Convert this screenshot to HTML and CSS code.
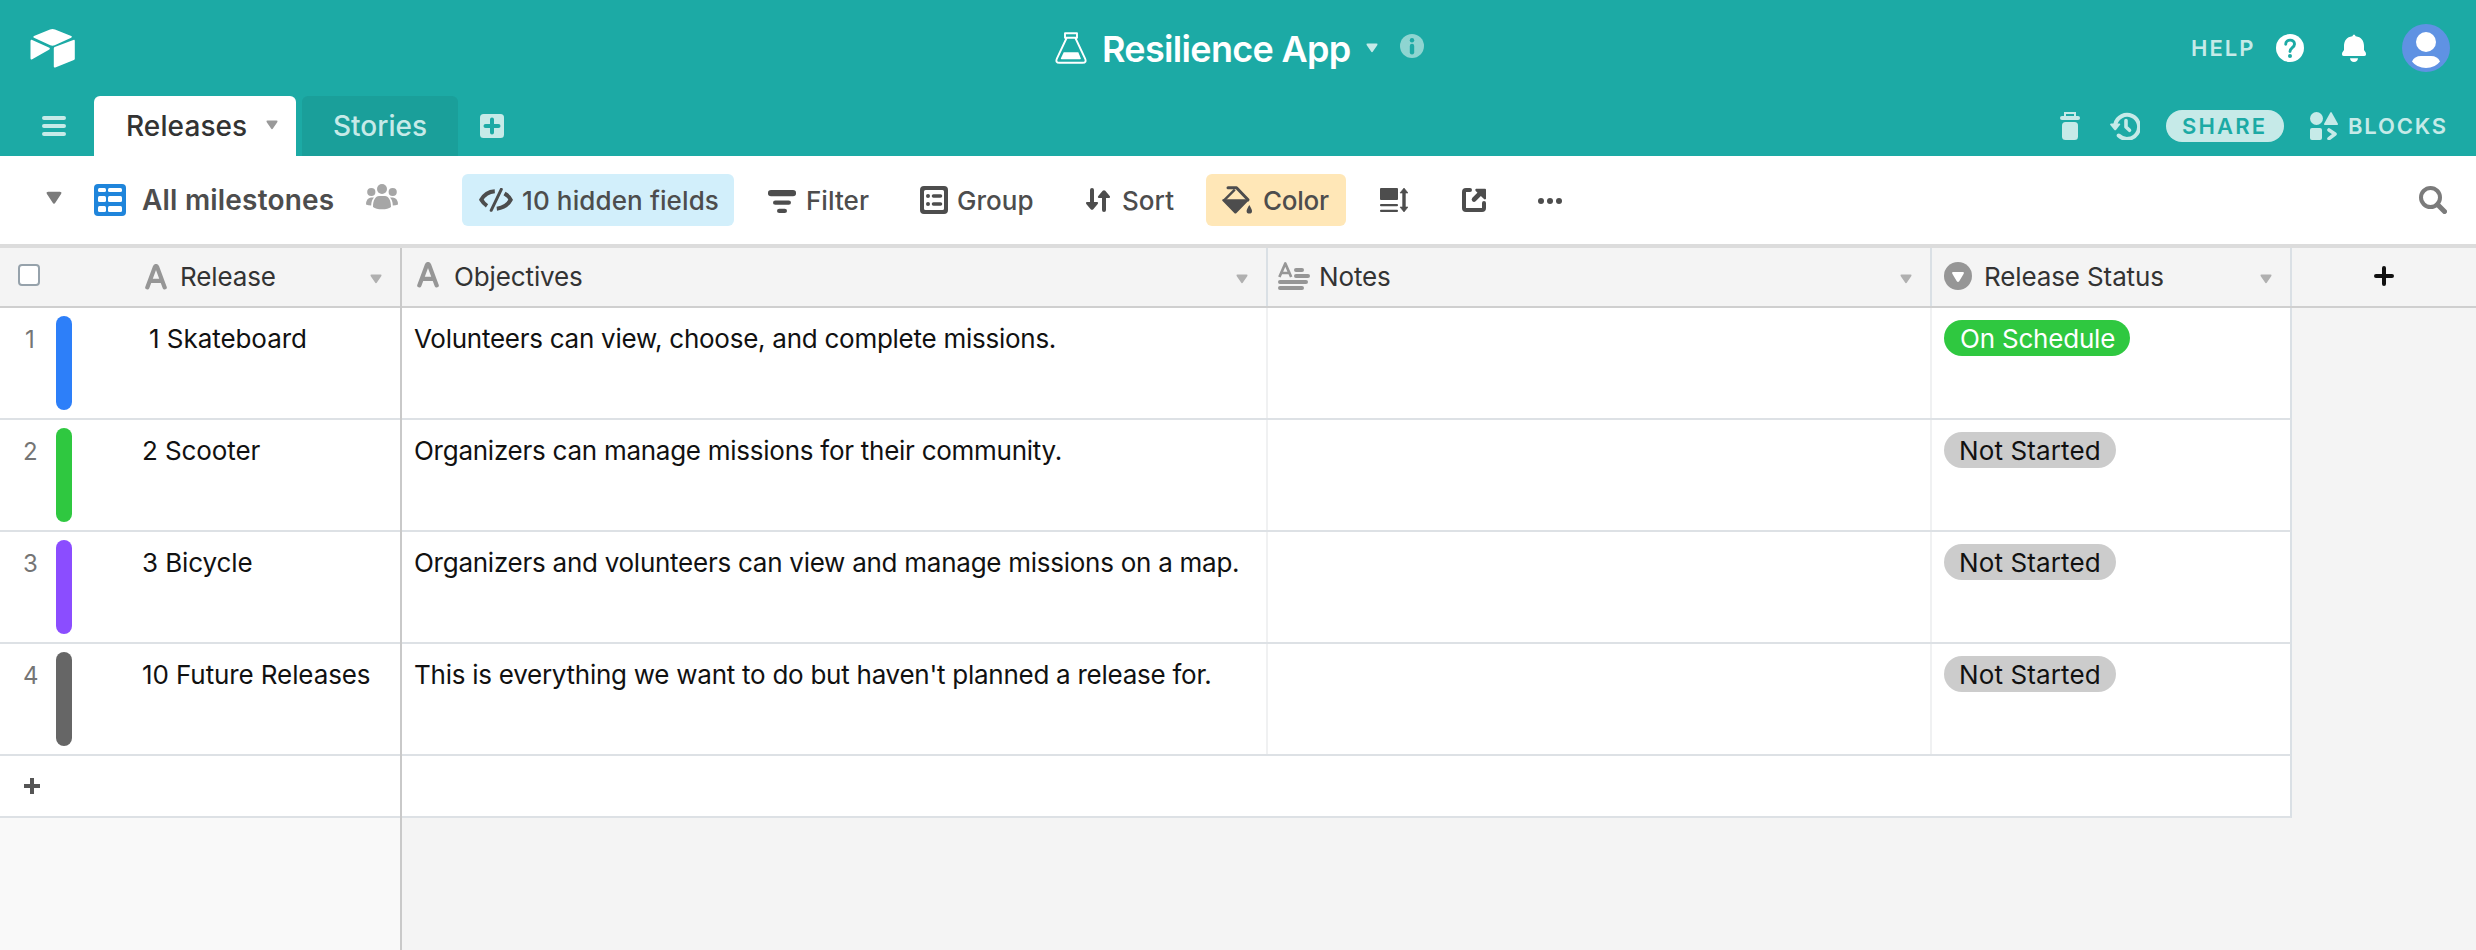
FILE: index.html
```html
<!DOCTYPE html>
<html lang="en">
<head>
<meta charset="utf-8">
<title>Resilience App</title>
<link rel="stylesheet" href="styles.css">
</head>
<body>
<svg class="defs" width="0" height="0">
  <symbol id="caret" viewBox="0 0 12 10"><path d="M1.600.5h8.800q1.600 0 1 1.400L7.100 8.300Q6 10 4.900 8.300L.6 1.900Q0 .5 1.600.5z"/></symbol>
  <symbol id="text-a" viewBox="0 0 22 26"><path d="M2.300 23.400 9.700 3.400q1.300-2.800 2.600 0l7.400 20M5.500 16.800h11" fill="none" stroke="currentColor" stroke-width="4.200" stroke-linecap="round" stroke-linejoin="round"/></symbol>
</svg>
<div class="app">
  <header class="header">
    <div class="topbar">
      <svg class="logo" viewBox="0 0 46 40"><path d="M20 1.400 4 7.900q-1.700.9 0 1.800l16.300 7.500q2.200.9 4.400 0L41.200 9.700q1.600-.9 0-1.700L25 1.400q-2.500-.9-5 0zM.5 13.200v17q0 1.700 1.700 1L19.400 21.400q1-.9 0-1.600L2.200 11.900Q.5 11.500.500 13.200zM23.800 20.300v18.200q0 1.500 1.500.9l18.600-7.300q.9-.4.9-1.400V12.900q0-1.600-1.500-1l-18.600 7q-.9.4-.9 1.400z"/></svg>
      <div class="title">
        <svg class="flask" viewBox="0 0 32 32"><path d="M10 1.200h12v4.600H10zM11.600 6 2 26.300Q0 30.800 4.500 30.800h23q4.500 0 2.500-4.500L20.400 6" fill="none" stroke="#fff" stroke-width="1.900" stroke-linejoin="round"/><path d="M8.700 20.200h14.600l2.500 6q.3 1-.8 1H6.600q-1 0-.7-1z" fill="#fff"/></svg>
        <h1>Resilience App</h1>
        <svg class="title-caret" viewBox="0 0 12 10"><use href="#caret"/></svg>
        <svg class="info" viewBox="0 0 24 24"><circle cx="12" cy="12" r="12" fill="#8ed5d1"/><circle cx="12" cy="6.200" r="2.200"/><path d="M12 12v6.200" stroke="#1caaa5" stroke-width="4.400" stroke-linecap="round"/></svg>
      </div>
      <div class="account">
        <span class="caps">HELP</span>
        <svg class="help-icon" viewBox="0 0 28 28"><circle cx="14" cy="14" r="14" fill="#fff"/><path d="M9.700 10.300c0-5.600 9-5.400 8.800-.2-.1 3.600-4.500 3.600-4.500 7.500" fill="none" stroke="#1caaa5" stroke-width="2.900" stroke-linecap="round"/><circle cx="14" cy="22" r="2" fill="#1caaa5"/></svg>
        <svg class="bell" viewBox="0 0 24 28"><path d="M10.300 2.300Q12-1.500 13.700 2.300C19.300 3 22 7 22 12v4l1.700 2.600Q24.800 22 22 22H2q-2.800 0-1.700-3.400L2 16v-4C2 7 4.700 3 10.300 2.300zM8 24.200h8q-.5 3.800-4 3.800t-4-3.800z"/></svg>
        <svg class="avatar" viewBox="0 0 48 48"><circle cx="24" cy="24" r="24" fill="#5f92e3"/><circle cx="24" cy="18" r="10" fill="#fff"/><path d="M10 37.500Q12.500 32 19 32h10q6.500 0 9 5.500-5 6.500-14 6.500t-14-6.500z" fill="#fff"/></svg>
      </div>
    </div>
    <div class="tabbar">
      <svg class="menu" viewBox="0 0 24 20"><path d="M2 2h20M2 10h20M2 18h20" stroke="#c6eae8" stroke-width="4" stroke-linecap="round"/></svg>
      <div class="tab active"><span>Releases</span><svg class="caret" viewBox="0 0 12 10"><use href="#caret"/></svg></div>
      <div class="tab">Stories</div>
      <svg class="add-tab" viewBox="0 0 24 24"><rect width="24" height="24" rx="3.500" fill="#c6eae8"/><path d="M12 5.500v13M5.500 12h13" stroke="#1caaa5" stroke-width="4" stroke-linecap="round"/></svg>
      <div class="base-actions">
        <svg class="trash" viewBox="0 0 20 28"><path d="M5 4V1h10v3" fill="none" stroke="#c6eae8" stroke-width="2"/><rect y="4" width="20" height="4" rx="2"/><rect x="2" y="10" width="16" height="18" rx="3.500"/></svg>
        <svg class="history" viewBox="0 0 30 28"><path d="M5.400 12A12 12 0 1 1 8.700 23.500" fill="none" stroke="#c6eae8" stroke-width="4" stroke-linecap="round"/><path d="M1.300 11.500h8q1.500.2.600 1.600l-3.700 4.600q-1 1-2 0L.3 13.100q-.7-1.400 1-1.600z"/><path d="M16 8.500v6.500l3.500 3.300" fill="none" stroke="#c6eae8" stroke-width="3.600" stroke-linecap="round" stroke-linejoin="round"/></svg>
        <span class="share">SHARE</span>
        <svg class="blocks" viewBox="0 0 28 28"><circle cx="6.500" cy="6.500" r="6.500"/><path d="M20.200.7q.8-1.200 1.600 0L27.800 11.500q.5 1.500-1 1.500H15.200q-1.500 0-1-1.500z"/><rect y="16" width="12" height="12" rx="2"/><path d="m19 18 6 4-6 4.600" fill="none" stroke="#c6eae8" stroke-width="3.600" stroke-linecap="round" stroke-linejoin="round"/></svg>
        <span class="caps">BLOCKS</span>
      </div>
    </div>
  </header>

  <div class="toolbar">
    <svg class="view-caret" viewBox="0 0 12 10" preserveAspectRatio="none"><use href="#caret"/></svg>
    <svg class="grid-icon" viewBox="0 0 32 32"><rect width="32" height="32" rx="4" fill="#1f85db"/><g fill="#fff"><rect x="4" y="4" width="8" height="4" rx="1.500"/><rect x="14" y="4" width="14" height="4" rx="1.500"/><rect x="4" y="12" width="8" height="6" rx="1.500"/><rect x="14" y="12" width="14" height="6" rx="1.500"/><rect x="4" y="22" width="8" height="6" rx="1.500"/><rect x="14" y="22" width="14" height="6" rx="1.500"/></g></svg>
    <span class="view-name">All milestones</span>
    <svg class="people" viewBox="0 0 32 26"><circle cx="16" cy="5" r="5"/><circle cx="5.300" cy="8" r="4.100"/><circle cx="26.700" cy="8" r="4.100"/><path d="M7 23c0-7 2.500-11 6-11h6c3.500 0 6 4 6 11q-3 2.300-9 2.300T7 23zM5 13.500h3Q5.400 16 5.200 21.500q-3 0-5.200-1 .2-6.500 5-7zM27 13.500h-3Q26.600 16 26.800 21.500q3 0 5.200-1-.2-6.500-5-7z"/></svg>
    <div class="tool hidden-fields"><svg class="i-hidden" viewBox="0 0 34 24"><g fill="none" stroke="currentColor"><path d="M15.800 3.200Q6.500 3.800 2.300 11.800 4.200 15.200 8 17.800" stroke-width="4"/><path d="M12.200 22.300 22.300 1.300" stroke-width="3" stroke-linecap="round"/><path d="M25.500 5.600Q29.800 8 31.700 11.800 27.500 19.600 17.800 20.700" stroke-width="4"/></g></svg><span>10 hidden fields</span></div>
    <div class="tool filter"><svg class="i-filter" viewBox="0 0 28 26" preserveAspectRatio="none"><rect width="28" height="7" rx="3"/><rect x="5" y="12" width="18" height="4.700" rx="2.300"/><rect x="9" y="21.300" width="10" height="4.700" rx="2.300"/></svg><span>Filter</span></div>
    <div class="tool group"><svg class="i-group" viewBox="0 0 28 28"><path d="M4 0h20q4 0 4 4v20q0 4-4 4H4q-4 0-4-4V4q0-4 4-4zm0 5.500v17q0 1.500 1.500 1.500h17q1.500 0 1.500-1.500v-17Q24 4 22.500 4h-17Q4 4 4 5.500z" fill-rule="evenodd"/><circle cx="8" cy="10" r="2"/><circle cx="8" cy="18" r="2"/><path d="M13.500 10h7M13.500 18h7" stroke="currentColor" stroke-width="3.600" stroke-linecap="round"/></svg><span>Group</span></div>
    <div class="tool sort"><svg class="i-sort" viewBox="0 0 24 24"><path d="M6 2v16M18 22V6" stroke="currentColor" stroke-width="4" stroke-linecap="round"/><path d="M1 14h10q1.800.3.700 1.900l-4.400 5.300q-1.300 1.300-2.600 0L.3 15.900Q-.8 14.300 1 14zM13 10h10q1.800-.3.700-1.900L19.300 2.800q-1.300-1.300-2.600 0l-4.400 5.300Q11.200 9.700 13 10z"/></svg><span>Sort</span></div>
    <div class="tool color"><svg class="i-color" viewBox="0 0 30 28"><path d="M6 1.700h8.500L26 13.800" fill="none" stroke="currentColor" stroke-width="3" stroke-linecap="round" stroke-linejoin="round"/><path d="m12.800 3.600-11 11" stroke="currentColor" stroke-width="2.400"/><path d="M.7 13.300h25.500q.8.800 0 1.700L14.500 27q-1.100 1-2.200 0L.6 15q-.8-.9.1-1.700zM27.300 19q2.700 4.300 2.700 6 0 2.600-2.700 2.600T24.600 25q0-1.700 2.700-6z"/></svg><span>Color</span></div>
    <svg class="i-height" viewBox="0 0 28 24"><rect width="18" height="12" rx="1"/><rect y="16" width="18" height="2.200" rx="1"/><rect y="21.800" width="18" height="2.200" rx="1"/><path d="M24 4v16" stroke="currentColor" stroke-width="3.400"/><path d="m24 0 4 5h-8zM24 24l-4-5h8z" stroke="currentColor" stroke-width=".6" stroke-linejoin="round"/></svg>
    <svg class="i-share" viewBox="0 0 24 24"><path d="M8 2H4Q2 2 2 4v16q0 2 2 2h16q2 0 2-2v-5" fill="none" stroke="currentColor" stroke-width="4" stroke-linecap="round"/><path d="m12 11.500 7-7" stroke="currentColor" stroke-width="4.600" stroke-linecap="round"/><path d="M14 .7h9q1 0 1 1v9q-1 1.400-2.300 0l-8-7.700Q12.500 1.500 14 .7z"/></svg>
    <svg class="i-more" viewBox="0 0 24 8"><circle cx="3" cy="4" r="3"/><circle cx="12" cy="4" r="3"/><circle cx="21" cy="4" r="3"/></svg>
    <svg class="search" viewBox="0 0 28 28"><circle cx="11.500" cy="11.500" r="9.500" fill="none" stroke="#7b7b7b" stroke-width="4"/><path d="m18.500 18.500 7 7" stroke="#7b7b7b" stroke-width="5" stroke-linecap="round"/></svg>
  </div>

  <main class="grid">
    <div class="frozen">
      <div class="head">
        <span class="checkbox"></span>
        <svg class="type-a" viewBox="0 0 22 26"><use href="#text-a"/></svg>
        <span>Release</span>
        <svg class="caret" viewBox="0 0 12 10"><use href="#caret"/></svg>
      </div>
      <div class="row"><span class="num">1</span><i class="bar blue"></i><span class="name indent">1 Skateboard</span></div>
      <div class="row"><span class="num">2</span><i class="bar green"></i><span class="name">2 Scooter</span></div>
      <div class="row"><span class="num">3</span><i class="bar purple"></i><span class="name">3 Bicycle</span></div>
      <div class="row"><span class="num">4</span><i class="bar gray"></i><span class="name">10 Future Releases</span></div>
      <div class="add-row"><svg viewBox="0 0 16 16"><path d="M8 0v16M0 8h16" stroke="#555" stroke-width="4"/></svg></div>
    </div>
    <div class="scroll">
      <div class="head">
        <div class="th objectives"><svg class="type-a" viewBox="0 0 22 26"><use href="#text-a"/></svg><span>Objectives</span><svg class="caret" viewBox="0 0 12 10"><use href="#caret"/></svg></div>
        <div class="th notes"><svg class="type-long" viewBox="0 0 32 28"><path d="M1.400 15 7.300 1.500 13.200 15M3.500 11h7.600" fill="none" stroke="currentColor" stroke-width="2.700" stroke-linejoin="round"/><path d="M18 8h6M18 14h12M2 20h26M2 26h22" stroke="currentColor" stroke-width="4" stroke-linecap="round"/></svg><span>Notes</span><svg class="caret" viewBox="0 0 12 10"><use href="#caret"/></svg></div>
        <div class="th status"><svg class="type-select" viewBox="0 0 28 28"><circle cx="14" cy="14" r="14"/><path d="M9 10h10q1.600.2.700 1.700L15.200 19.300q-1.200 1.600-2.400 0L8.300 11.700Q7.400 10.200 9 10z" fill="#fff"/></svg><span>Release Status</span><svg class="caret" viewBox="0 0 12 10"><use href="#caret"/></svg></div>
        <div class="add-field"><svg viewBox="0 0 20 20"><path d="M10 2v16M2 10h16" stroke="#111" stroke-width="4" stroke-linecap="round"/></svg></div>
      </div>
      <div class="row"><div class="td objectives">Volunteers can view, choose, and complete missions.</div><div class="td notes"></div><div class="td status"><span class="pill on">On Schedule</span></div></div>
      <div class="row"><div class="td objectives">Organizers can manage missions for their community.</div><div class="td notes"></div><div class="td status"><span class="pill">Not Started</span></div></div>
      <div class="row"><div class="td objectives">Organizers and volunteers can view and manage missions on a map.</div><div class="td notes"></div><div class="td status"><span class="pill">Not Started</span></div></div>
      <div class="row"><div class="td objectives">This is everything we want to do but haven't planned a release for.</div><div class="td notes"></div><div class="td status"><span class="pill">Not Started</span></div></div>
      <div class="add-row"></div>
    </div>
  </main>
</div>
</body>
</html>
```
FILE: styles.css
```css
* { box-sizing: border-box; }
body {
  margin: 0;
  font-family: Inter, "Liberation Sans", sans-serif;
  font-size: 26px;
  color: #111;
}
svg { display: block; flex: none; fill: currentColor; }
.defs { position: absolute; }
.app { width: 2476px; height: 950px; display: flex; flex-direction: column; overflow: hidden; background: #f4f4f4; }

/* Header */
.header { height: 156px; flex: none; background: #1caaa5; color: #c6eae8; }
.topbar { height: 96px; display: grid; grid-template-columns: 1055px 1fr auto; align-items: center; }
.logo { width: 46px; height: 40px; margin-left: 30px; color: #fff; }
.title { display: flex; align-items: center; }
.flask { width: 32px; height: 32px; }
.title h1 { margin: 2px 0 0 15px; width: 264px; font-size: 36px; line-height: 44px; font-weight: 600; letter-spacing: -.68px; color: #fff; white-space: nowrap; }
.title-caret { width: 12px; height: 10px; color: #c6eae8; }
.info { width: 24px; height: 24px; margin: -4px 0 0 22px; color: #1caaa5; }
.caps { font-size: 22px; line-height: 30px; font-weight: 600; letter-spacing: 2px; }
.account { display: flex; align-items: center; padding-right: 26px; color: #fff; }
.account .caps { width: 85px; color: #c6eae8; }
.help-icon { width: 28px; height: 28px; }
.bell { width: 24px; height: 28px; margin-left: 38px; }
.avatar { width: 48px; height: 48px; margin-left: 36px; }

.tabbar { height: 60px; display: flex; align-items: center; padding-right: 26px; }
.menu { width: 24px; height: 20px; margin-left: 42px; }
.tab { height: 60px; width: 156px; margin-left: 6px; padding-left: 31px; display: flex; align-items: center; font-size: 28px; font-weight: 500; border-radius: 6px 6px 0 0; background: #1a9f9a; }
.tab.active { width: 202px; margin-left: 28px; padding-left: 32px; background: #fff; color: #333; }
.tab.active span { width: 140px; letter-spacing: .1px; }
.caret { width: 12px; height: 10px; color: #b0b0b0; }
.tab .caret { color: #999; margin-top: -3px; }
.add-tab { width: 24px; height: 24px; margin-left: 22px; }
.base-actions { margin-left: auto; display: flex; align-items: center; }
.base-actions .caps { width: 102px; letter-spacing: 1.8px; white-space: nowrap; }
.trash { width: 20px; height: 28px; }
.history { width: 30px; height: 28px; margin-left: 30px; }
.share { width: 118px; height: 32px; margin-left: 26px; padding-left: 16px; border-radius: 16px; background: #c6eae8; color: #1caaa5; font-size: 22px; line-height: 32px; font-weight: 600; letter-spacing: 2.2px; }
.blocks { width: 28px; height: 28px; margin: 0 10px 0 26px; }

/* View toolbar */
.toolbar { height: 92px; flex: none; padding: 0 29px 0 46px; display: flex; align-items: center; background: #fff; border-bottom: 4px solid #dcdcdc; color: #4d4d4d; }
.view-caret { width: 16px; height: 14px; margin-top: -4px; color: #7b7b7b; }
.grid-icon { width: 32px; height: 32px; margin-left: 32px; }
.view-name { width: 224px; margin-left: 16px; font-size: 28px; font-weight: 600; letter-spacing: .2px; white-space: nowrap; }
.people { width: 32px; height: 26px; margin-top: -6px; color: #a6a6a6; }
.tool { height: 52px; display: flex; align-items: center; font-weight: 500; white-space: nowrap; }
.tool span { line-height: 32px; padding-top: 1px; letter-spacing: .05px; }
.hidden-fields { width: 272px; margin: 0 34px 0 64px; padding-left: 17px; border-radius: 6px; background: #d2effb; }
.hidden-fields span { letter-spacing: .12px; }
.i-hidden { width: 34px; height: 24px; margin-right: 9px; }
.filter { width: 152px; }
.i-filter { width: 28px; height: 23px; margin: 2px 10px 0 0; }
.group { width: 166px; }
.i-group { width: 28px; height: 28px; margin-right: 9px; }
.sort { width: 120px; }
.i-sort { width: 24px; height: 24px; margin-right: 12px; }
.color { width: 140px; padding-left: 16px; border-radius: 6px; background: #ffe7b7; }
.color span { letter-spacing: -.25px; }
.i-color { width: 30px; height: 28px; margin-right: 11px; }
.i-height { width: 28px; height: 24px; margin-left: 34px; }
.i-share { width: 24px; height: 24px; margin-left: 54px; }
.i-more { width: 24px; height: 8px; margin: 2px 0 0 52px; }
.search { width: 28px; height: 28px; margin-left: auto; }

/* Data grid */
.grid { flex: 1; display: flex; }
.frozen { width: 402px; flex: none; border-right: 2px solid #c9c9c9; background: #f9f9f9; }
.scroll { flex: 1; }
.head { height: 60px; display: flex; align-items: center; background: #f4f4f4; border-bottom: 2px solid #cfcfcf; color: #333; }
.head span { letter-spacing: -.12px; margin-top: -1px; }
.head .caret { margin: 3px 0 0 auto; }
.head .checkbox { width: 22px; height: 22px; margin: -4px 105px 0 18px; border: 2px solid #96a2ab; border-radius: 4px; background: #fff; }
.type-a { width: 22px; height: 26px; margin-right: 13px; color: #969696; }
.frozen .head .caret { margin-right: 18px; }
.row { height: 112px; display: flex; line-height: 32px; }
.frozen .row { background: #fff; border-bottom: 2px solid #dde1e5; }
.num { width: 56px; padding: 16px 0 0 23px; font-size: 24px; color: #757575; letter-spacing: -.3px; }
.bar { width: 16px; height: 94px; margin-top: 8px; border-radius: 8px; }
.blue { background: #2d7ff9; }
.green { background: #2fc840; }
.purple { background: #8b4dff; }
.gray { background: #666; }
.name { padding: 15px 0 0 70px; letter-spacing: -.1px; white-space: nowrap; }
.name.indent { padding-left: 77px; letter-spacing: -.05px; }
.frozen .row:nth-child(2) .num { padding-left: 25px; }
.add-row { height: 62px; display: flex; align-items: center; padding-left: 24px; background: #fff; border-bottom: 2px solid #dde1e5; }
.add-row svg { width: 16px; height: 16px; }

.th { height: 58px; display: flex; align-items: center; border-right: 2px solid #dae0e5; }
.th .caret { margin-right: 18px; }
.objectives { width: 866px; }
.notes { width: 664px; }
.status { width: 360px; }
.th.objectives { padding-left: 15px; }
.th.objectives .type-a { margin: -4px 15px 0 0; }
.th.notes { padding-left: 10px; }
.type-long { width: 32px; height: 28px; margin: -2px 9px 0 0; color: #969696; }
.th.status { padding-left: 12px; }
.type-select { width: 28px; height: 28px; margin: -2px 12px 0 0; color: #969696; }
.add-field { padding: 0 0 2px 82px; }
.add-field svg { width: 20px; height: 20px; }
.scroll .row, .scroll .add-row { width: 1890px; background: #fff; border-right: 2px solid #dae0e5; border-bottom: 2px solid #dde1e5; }
.td { border-right: 2px solid #f0f1f2; white-space: nowrap; }
.td.status { width: 358px; border-right: 0; padding: 12px 0 0 12px; }
.td.objectives { padding: 15px 0 0 12px; letter-spacing: -.26px; }
.pill { display: block; width: 172px; height: 36px; line-height: 37px; padding-left: 15px; border-radius: 18px; background: #ccc; color: #111; letter-spacing: .12px; }
.pill.on { width: 186px; padding-left: 16px; background: #2fc840; color: #fff; letter-spacing: -.2px; }
```
